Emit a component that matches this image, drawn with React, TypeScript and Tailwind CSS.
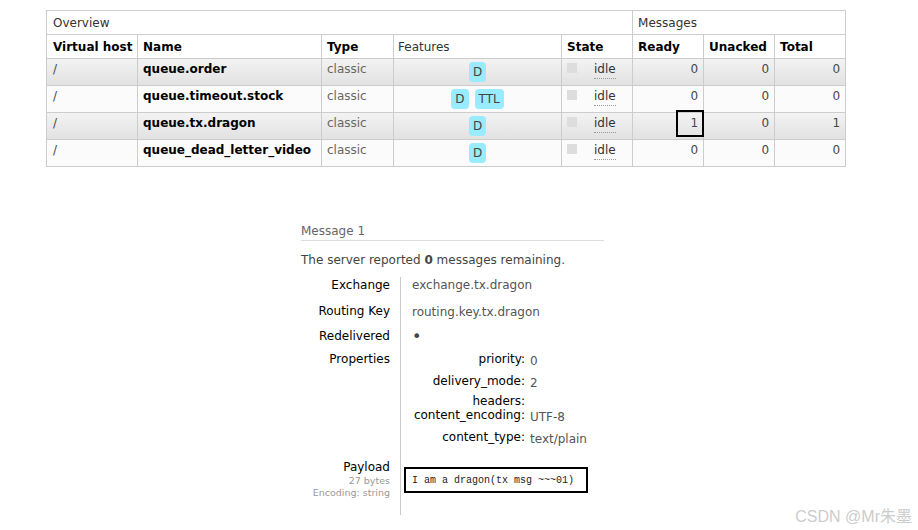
import React from "react";

type Row = {
  vhost: string;
  name: string;
  type: string;
  features: string[];
  ready: number;
  unacked: number;
  total: number;
  mark?: boolean;
};

const rows: Row[] = [
  { vhost: "/", name: "queue.order", type: "classic", features: ["D"], ready: 0, unacked: 0, total: 0 },
  { vhost: "/", name: "queue.timeout.stock", type: "classic", features: ["D", "TTL"], ready: 0, unacked: 0, total: 0 },
  { vhost: "/", name: "queue.tx.dragon", type: "classic", features: ["D"], ready: 1, unacked: 0, total: 1, mark: true },
  { vhost: "/", name: "queue_dead_letter_video", type: "classic", features: ["D"], ready: 0, unacked: 0, total: 0 },
];

// [key, value, row height]
const props: [string, string, string][] = [
  ["priority:", "0", "h-[22px]"],
  ["delivery_mode:", "2", "h-[20px]"],
  ["headers:", "", "h-[14px]"],
  ["content_encoding:", "UTF-8", "h-[22px]"],
  ["content_type:", "text/plain", "h-[22px]"],
];

function Badge({ label }: { label: string }) {
  return (
    <span className="inline-block rounded-[4px] bg-[#99ebff] px-[4px] leading-[20px] text-[#444]">
      {label}
    </span>
  );
}

const cell = "border border-[#ccc] px-[5px] pt-[2px] align-top";

export default function App() {
  return (
    <div className="relative h-[530px] w-[918px] bg-white font-['DejaVu_Sans',Verdana,sans-serif] text-[12px] leading-[16px] text-[#484848]">
      <div className="pl-[46px] pt-[10px]">
        <table className="w-[799px] table-fixed border-collapse">
          <colgroup>
            <col className="w-[91px]" />
            <col className="w-[184px]" />
            <col className="w-[72px]" />
            <col className="w-[168px]" />
            <col className="w-[71px]" />
            <col className="w-[71px]" />
            <col className="w-[71px]" />
            <col className="w-[71px]" />
          </colgroup>
          <thead>
            <tr className="h-[24px]">
              <th colSpan={5} className="border border-[#ccc] px-[6px] text-left font-normal text-[#333]">
                Overview
              </th>
              <th colSpan={3} className="border border-[#ccc] px-[5px] text-left font-normal text-[#333]">
                Messages
              </th>
            </tr>
            <tr className="h-[24px] whitespace-nowrap text-left text-black">
              <th className="border border-[#ccc] px-[6px]">Virtual host</th>
              <th className="border border-[#ccc] px-[5px]">Name</th>
              <th className="border border-[#ccc] px-[5px]">Type</th>
              <th className="border border-[#ccc] px-[4px] font-normal text-[#333]">Features</th>
              <th className="border border-[#ccc] px-[5px]">State</th>
              <th className="border border-[#ccc] px-[5px]">Ready</th>
              <th className="border border-[#ccc] px-[5px]">Unacked</th>
              <th className="border border-[#ccc] px-[5px]">Total</th>
            </tr>
          </thead>
          <tbody>
            {rows.map((r, i) => (
              <tr
                key={r.name}
                className={
                  i % 2 === 0
                    ? "h-[27px] bg-gradient-to-b from-[#f3f3f3] to-[#e1e1e1]"
                    : "h-[27px] bg-[#fbfbfb]"
                }
              >
                <td className={`${cell} px-[6px]`}>{r.vhost}</td>
                <td className={`${cell} whitespace-nowrap font-bold text-black`}>{r.name}</td>
                <td className={`${cell} text-[#666]`}>{r.type}</td>
                <td className={`${cell} text-center`}>
                  <span className="inline-flex gap-[6px] pt-[1px]">
                    {r.features.map((f) => (
                      <Badge key={f} label={f} />
                    ))}
                  </span>
                </td>
                <td className={cell}>
                  <div className="flex items-start">
                    <span className="mt-[2px] h-[10px] w-[10px] bg-[#ddd]" />
                    <span className="ml-[17px] border-b border-dotted border-[#999] leading-[17px] text-[#333]">
                      idle
                    </span>
                  </div>
                </td>
                <td className={`${cell} relative text-right`}>
                  {r.ready}
                  {r.mark ? (
                    <span className="absolute right-[-1px] top-[-3px] h-[27px] w-[28px] border-2 border-black" />
                  ) : null}
                </td>
                <td className={`${cell} text-right`}>{r.unacked}</td>
                <td className={`${cell} text-right`}>{r.total}</td>
              </tr>
            ))}
          </tbody>
        </table>
      </div>

      <div className="ml-[301px] mt-[56px] w-[303px]">
        <div className="h-[18px] border-b border-[#ddd] text-[#666]">Message 1</div>
        <p className="mt-[11px] text-[#444]">
          The server reported <span className="font-bold">0</span> messages remaining.
        </p>
        <div className="mt-[9px] grid grid-cols-[100px_1fr]">
          <div className="h-[25px] border-r border-[#ccc] pr-[10px] text-right text-black">Exchange</div>
          <div className="h-[25px] pl-[11px] text-[#555]">exchange.tx.dragon</div>

          <div className="h-[25px] border-r border-[#ccc] pr-[10px] pt-[1px] text-right text-black">Routing Key</div>
          <div className="h-[25px] pl-[11px] pt-[2px] text-[#555]">routing.key.tx.dragon</div>

          <div className="h-[24px] border-r border-[#ccc] pr-[10px] pt-[1px] text-right text-black">Redelivered</div>
          <div className="h-[24px] pl-[11px] pt-[2px] text-[16px] text-[#444]">•</div>

          <div className="border-r border-[#ccc] pr-[10px] text-right text-black">Properties</div>
          <div className="pl-[11px]">
            <div className="grid grid-cols-[113px_auto] gap-x-[5px]">
              {props.map(([k, v, h]) => (
                <React.Fragment key={k}>
                  <div className={`${h} text-right text-black`}>{k}</div>
                  <div className={`${h} pt-[2px] text-[#555]`}>{v}</div>
                </React.Fragment>
              ))}
            </div>
          </div>

          <div className="flex flex-col items-end border-r border-[#ccc] pb-[16px] pr-[10px] pt-[8px]">
            <span className="text-black">Payload</span>
            <span className="text-[9.5px] leading-[12px] text-[#999]">27 bytes</span>
            <span className="text-[9.5px] leading-[12px] text-[#999]">Encoding: string</span>
          </div>
          <div className="pl-[3px] pt-[16px]">
            <div className="w-[184px] border-2 border-black px-[6px] pb-[4px] pt-[5px] font-['Liberation_Mono',monospace] text-[10px] leading-[13px] text-[#222]">
              I am a dragon(tx msg ~~~01)
            </div>
          </div>
        </div>
      </div>

      <div className="absolute bottom-[5px] right-[6px] font-['Liberation_Sans','Noto_Sans_CJK_SC',sans-serif] text-[16px] text-[#cccccc]">
        CSDN @Mr朱墨
      </div>
    </div>
  );
}
